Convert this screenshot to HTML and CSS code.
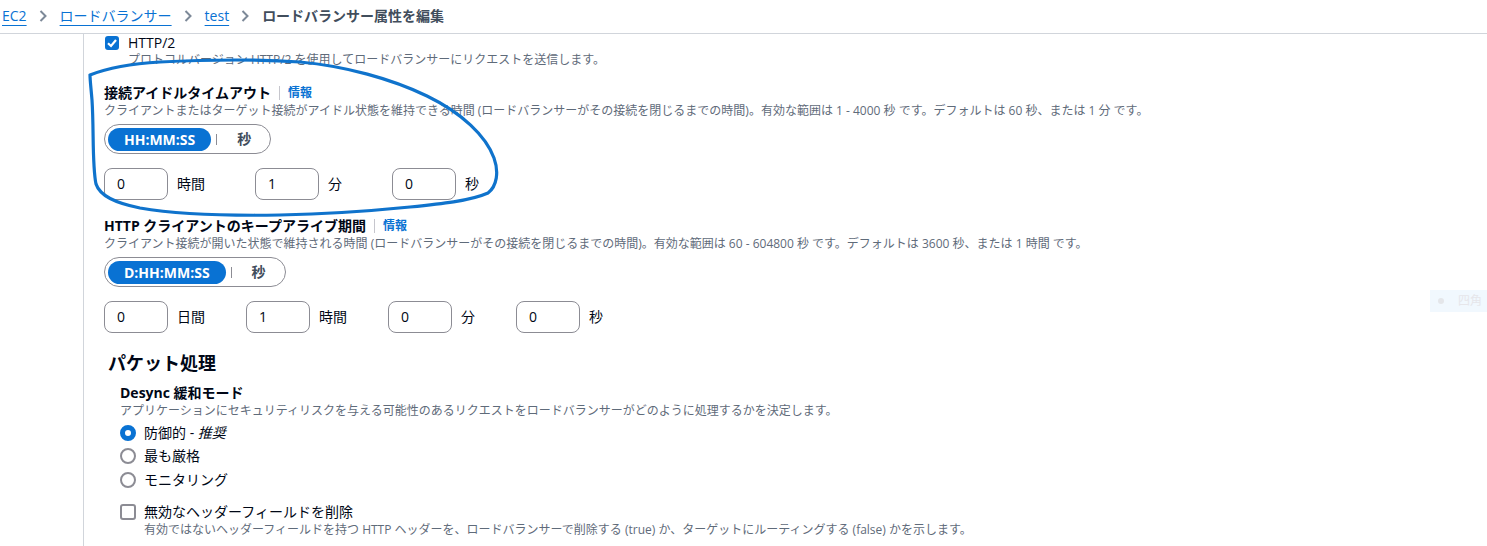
FILE: index.html
```html
<!DOCTYPE html>
<html lang="ja">
<head>
<meta charset="utf-8">
<title>ロードバランサー属性を編集</title>
<link rel="stylesheet" href="styles.css">
</head>
<body>
<nav class="crumbs">
  <a class="crumb-link" href="#">EC2</a>
  <svg class="chev" width="8" height="12" viewBox="0 0 8 12"><path d="M1.5 1 L6.5 6 L1.5 11" fill="none" stroke="#7d8998" stroke-width="2"/></svg>
  <a class="crumb-link" href="#">ロードバランサー</a>
  <svg class="chev" width="8" height="12" viewBox="0 0 8 12"><path d="M1.5 1 L6.5 6 L1.5 11" fill="none" stroke="#7d8998" stroke-width="2"/></svg>
  <a class="crumb-link" href="#">test</a>
  <svg class="chev" width="8" height="12" viewBox="0 0 8 12"><path d="M1.5 1 L6.5 6 L1.5 11" fill="none" stroke="#7d8998" stroke-width="2"/></svg>
  <span class="crumb-current">ロードバランサー属性を編集</span>
</nav>

<div class="layout">
  <aside class="side"></aside>
  <main class="content">
    <div class="check-row first">
      <span class="cbox on"><svg width="14" height="14" viewBox="0 0 14 14"><path d="M3 7.2 L6 10 L11 4" fill="none" stroke="#fff" stroke-width="2.2"/></svg></span>
      <span class="check-label">HTTP/2</span>
    </div>
    <p class="desc indent-check">プロトコルバージョン HTTP/2 を使用してロードバランサーにリクエストを送信します。</p>

    <section class="field f-idle">
      <div class="label-row"><span class="label">接続アイドルタイムアウト</span><span class="info">情報</span></div>
      <p class="desc">クライアントまたはターゲット接続がアイドル状態を維持できる時間 (ロードバランサーがその接続を閉じるまでの時間)。有効な範囲は 1 - 4000 秒 です。デフォルトは 60 秒、または 1 分 です。</p>
      <div class="seg">
        <span class="seg-on">HH:MM:SS</span><span class="seg-sep"></span><span class="seg-off">秒</span>
      </div>
      <div class="inputs gap50">
        <div class="in-group"><span class="inp">0</span><span class="unit">時間</span></div>
        <div class="in-group"><span class="inp">1</span><span class="unit">分</span></div>
        <div class="in-group"><span class="inp">0</span><span class="unit">秒</span></div>
      </div>
    </section>

    <section class="field f-keep">
      <div class="label-row"><span class="label">HTTP クライアントのキープアライブ期間</span><span class="info">情報</span></div>
      <p class="desc">クライアント接続が開いた状態で維持される時間 (ロードバランサーがその接続を閉じるまでの時間)。有効な範囲は 60 - 604800 秒 です。デフォルトは 3600 秒、または 1 時間 です。</p>
      <div class="seg">
        <span class="seg-on">D:HH:MM:SS</span><span class="seg-sep"></span><span class="seg-off">秒</span>
      </div>
      <div class="inputs gap40">
        <div class="in-group"><span class="inp">0</span><span class="unit">日間</span></div>
        <div class="in-group"><span class="inp">1</span><span class="unit">時間</span></div>
        <div class="in-group"><span class="inp">0</span><span class="unit">分</span></div>
        <div class="in-group"><span class="inp">0</span><span class="unit">秒</span></div>
      </div>
    </section>

    <h2 class="heading">パケット処理</h2>
    <section class="sub">
      <div class="label">Desync 緩和モード</div>
      <p class="desc">アプリケーションにセキュリティリスクを与える可能性のあるリクエストをロードバランサーがどのように処理するかを決定します。</p>
      <div class="radios">
        <div class="radio-row"><span class="radio on"></span><span>防御的 - <em>推奨</em></span></div>
        <div class="radio-row"><span class="radio"></span><span>最も厳格</span></div>
        <div class="radio-row"><span class="radio"></span><span>モニタリング</span></div>
      </div>
      <div class="check-row hdr">
        <span class="cbox off"></span>
        <span class="check-label">無効なヘッダーフィールドを削除</span>
      </div>
      <p class="desc indent-check2">有効ではないヘッダーフィールドを持つ HTTP ヘッダーを、ロードバランサーで削除する (true) か、ターゲットにルーティングする (false) かを示します。</p>
    </section>
  </main>
</div>

<div class="ghost"><span class="ghost-dot"></span><span class="ghost-text">四角</span></div>

<svg class="annot" width="1487" height="546" viewBox="0 0 1487 546">
  <path d="M90 75 C 105 69, 125 64, 160 62 C 220 59, 270 60, 300 62 C 345 66, 392 79, 427 96 C 462 113, 486 136, 494 158 C 499 172, 497 186, 488 193 C 470 201, 440 204, 410 207 C 370 211, 330 214, 280 215 C 220 216, 175 214, 140 208 C 115 203, 100 196, 96 184 C 92 165, 94 130, 92 100 C 91 88, 90 80, 90 75" fill="none" stroke="#0f73cc" stroke-width="3.2" stroke-linecap="round"/>
</svg>
</body>
</html>
```

FILE: styles.css
```css
* { box-sizing: border-box; }
html, body { margin: 0; padding: 0; }
body {
  font-family: "Open Sans", "Noto Sans CJK JP", sans-serif;
  font-size: 14px;
  line-height: 20px;
  color: #000716;
  background: #fff;
  width: 1487px;
  height: 546px;
  overflow: hidden;
  position: relative;
}
p { margin: 0; }

.crumbs {
  height: 34px;
  border-bottom: 1px solid #d1d5db;
  display: flex;
  align-items: center;
  padding: 0 0 1px 2px;
}
.crumb-link {
  color: #0972d3;
  text-decoration: underline;
  text-underline-offset: 4px;
  text-decoration-thickness: 1px;
}
.chev { margin: 0 13px 0 12px; flex: none; }
.crumb-current { font-weight: 700; color: #414d5c; }

.layout { display: flex; height: 512px; }
.side { width: 84px; flex: none; border-right: 1px solid #d1d5db; }
.content { padding-left: 20px; flex: 1; }

.check-row { display: flex; align-items: center; }
.check-row.first { height: 18px; padding-left: 1px; }
.cbox {
  width: 14px; height: 14px; border-radius: 3px; flex: none;
  display: inline-flex; align-items: center; justify-content: center;
}
.cbox.on { background: #0972d3; }
.check-label { margin-left: 9px; }
.desc { font-size: 12px; line-height: 16px; color: #5f6b7a; }
.indent-check { padding-left: 24px; }

.field { padding-top: 15px; }
.f-keep { padding-top: 16px; }
.label-row { display: flex; align-items: center; }
.label { font-weight: 700; }
.info {
  color: #0972d3; font-weight: 700; font-size: 12px;
  border-left: 1px solid #c6c6cd; padding-left: 8px; margin-left: 8px;
  line-height: 14px;
}

.seg {
  margin-top: 5px;
  display: inline-flex; align-items: center;
  height: 30px;
  border: 1px solid #8c8c94;
  border-radius: 16px;
  padding: 0 19px 0 3px;
}
.seg-on {
  background: #0972d3; color: #fff; font-weight: 700;
  height: 23px; line-height: 23px; border-radius: 12px;
  padding: 0 16px;
}
.seg-sep { width: 1px; height: 11px; background: #8c8c94; margin: 0 20px 0 5px; }
.seg-off { font-weight: 700; color: #414d5c; }

.inputs { display: flex; margin-top: 14px; }
.gap50 { gap: 50px; }
.gap40 { gap: 41px; }
.in-group { display: flex; align-items: center; }
.inp {
  width: 64px; height: 32px; border: 1px solid #8c8c94; border-radius: 8px;
  padding-left: 12px; line-height: 30px;
}
.unit { margin-left: 9px; }

.heading {
  margin: 18px 0 0 4px; font-size: 18px; line-height: 24px; font-weight: 700;
}
.sub { padding-left: 16px; margin-top: 8px; }
.radios { margin-top: 2px; }
.radio-row { display: flex; align-items: center; height: 23.5px; }
.radio {
  width: 16px; height: 16px; border-radius: 50%; border: 2px solid #8c8c94;
  margin-right: 8px; flex: none;
}
.radio.on { border: 5px solid #0972d3; }
em { font-style: italic; }
.check-row.hdr { margin-top: 10px; height: 20px; }
.cbox.off { width: 16px; height: 16px; border: 2px solid #8c8c94; border-radius: 3px; }
.hdr .check-label { margin-left: 8px; }
.indent-check2 { padding-left: 24px; }

.ghost {
  position: absolute; right: 0; top: 290px; width: 57px; height: 22px;
  background: #f1f8fe; display: flex; align-items: center;
}
.ghost-dot { width: 6px; height: 6px; border-radius: 50%; background: #e4e6ea; margin: 0 14px 0 8px; }
.ghost-text { font-size: 12px; color: #e6e6ea; }

.annot { position: absolute; left: 0; top: 0; pointer-events: none; }
```
